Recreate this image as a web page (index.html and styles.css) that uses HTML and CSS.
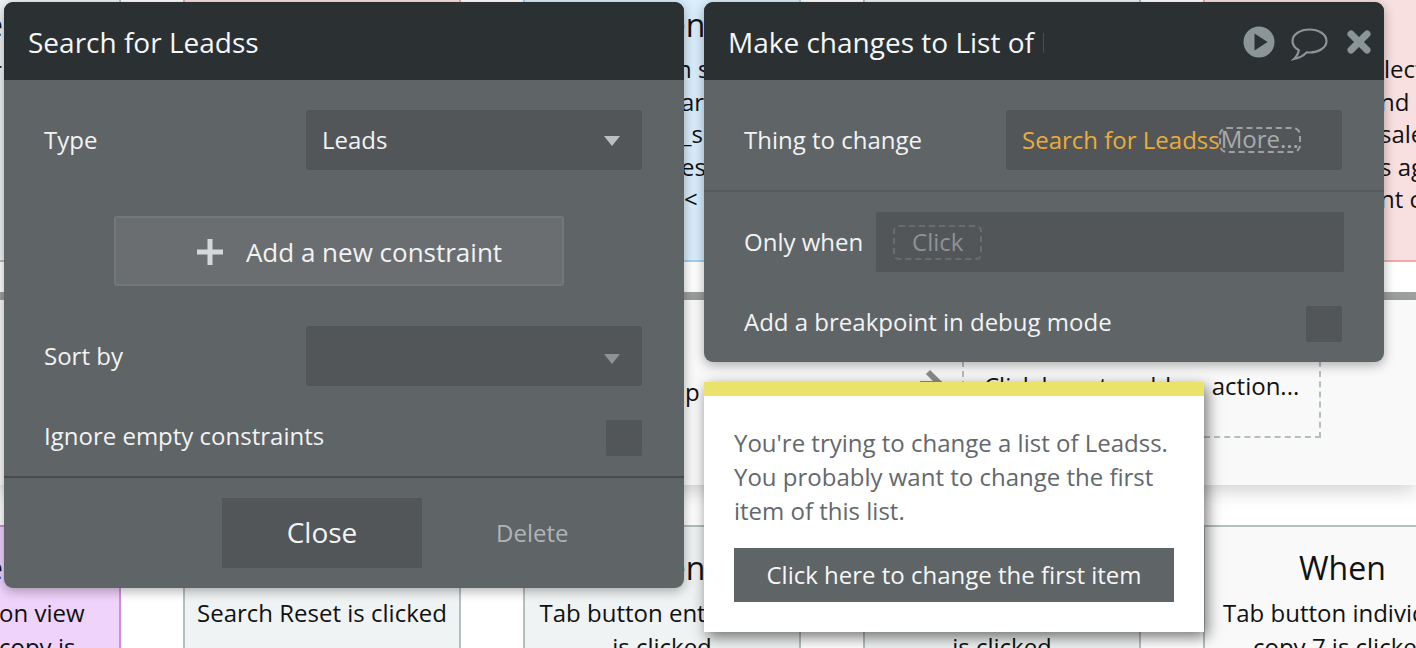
FILE: index.html
```html
<!DOCTYPE html>
<html lang="en">
<head>
<meta charset="utf-8">
<title>Workflow editor</title>
<link rel="stylesheet" href="styles.css">
</head>
<body>
<div class="canvas">
  <div class="row row-top">
    <div class="card card-edge gray">
      <div class="title edge-title">e</div>
      <div class="line edge-line">r</div>
    </div>
    <div class="card pink"></div>
    <div class="card blue">
      <div class="title">When</div>
      <div class="frag frag-n">n s</div>
      <div class="frag">ar</div>
      <div class="frag">_s</div>
      <div class="frag">es</div>
      <div class="frag frag-lt">&lt;</div>
    </div>
    <div class="card gray"></div>
    <div class="card card-wide pink">
      <div class="title"></div>
      <div class="frag frag-right frag-lect">lect</div>
      <div class="frag frag-right">nd</div>
      <div class="frag frag-right">sale</div>
      <div class="frag frag-right">s ag</div>
      <div class="frag frag-right">nt c</div>
    </div>
  </div>
  <div class="bar"></div>
  <div class="section">
    <div class="step-label">p              l     l      l</div>
    <svg class="step-arrow" width="38" height="40" viewBox="0 0 38 40" aria-hidden="true">
      <path d="M0 26H22M8 14L24 30" fill="none" stroke="#8c8c8c" stroke-width="6"/>
    </svg>
    <div class="add-action">Click here to add an action...</div>
  </div>
  <div class="row row-bottom">
    <div class="card card-edge purple">
      <div class="title edge-title">e</div>
      <div class="line on-view">on view</div>
      <div class="line on-view">copy is</div>
    </div>
    <div class="card gray">
      <div class="title">When</div>
      <div class="line">Search Reset is clicked</div>
    </div>
    <div class="card gray">
      <div class="title">When</div>
      <div class="line line-shift">Tab button entries</div>
      <div class="line">is clicked</div>
    </div>
    <div class="card gray">
      <div class="title">When</div>
      <div class="line">Tab button</div>
      <div class="line">is clicked</div>
    </div>
    <div class="card card-wide light">
      <div class="title last-title">When</div>
      <div class="line last-line">Tab button individual</div>
      <div class="line last-line">copy 7 is clicked</div>
    </div>
  </div>

  <section class="panel panel-search">
    <header class="panel-head"><span class="panel-title">Search for Leadss</span></header>
    <div class="field-row first-row">
      <span class="label">Type</span>
      <div class="select"><span>Leads</span><i class="caret"></i></div>
    </div>
    <button class="add-constraint" type="button">
      <svg width="28" height="28" viewBox="0 0 28 28" aria-hidden="true"><path d="M14 1V27M1 14H27" stroke="#d6d7d8" stroke-width="5" fill="none"/></svg>
      <span>Add a new constraint</span>
    </button>
    <div class="field-row sort-row">
      <span class="label">Sort by</span>
      <div class="select"><span></span><i class="caret dim"></i></div>
    </div>
    <div class="field-row check-row ignore-row">
      <span class="label">Ignore empty constraints</span>
      <div class="check"></div>
    </div>
    <div class="rule rule-dark"></div>
    <div class="foot">
      <button class="close" type="button">Close</button>
      <span class="delete">Delete</span>
    </div>
  </section>

  <section class="panel panel-action">
    <header class="panel-head">
      <span class="panel-title clipped">Make changes to List of Leadss</span>
      <div class="head-icons">
        <svg width="32" height="32" viewBox="0 0 32 32" aria-hidden="true"><circle cx="16" cy="16" r="15.5" fill="#8b9597"/><path d="M11.5 7.5L24.5 16L11.5 24.5Z" fill="#2b3033"/></svg>
        <svg class="icon-chat" width="37" height="33" viewBox="0 0 37 33" aria-hidden="true"><path d="M18.500 1.500C9.300 1.500 1.500 6.300 1.500 13C1.500 16.800 4 20 7.800 22.200C7.400 25 5.800 28.500 3 31C7.500 30 12.500 27.500 15.500 24.400C16.500 24.500 17.500 24.500 18.500 24.500C27.700 24.500 35.500 19.700 35.500 13C35.500 6.300 27.700 1.500 18.500 1.500Z" fill="none" stroke="#8b9597" stroke-width="2.200"/></svg>
        <svg class="icon-x" width="24" height="24" viewBox="0 0 24 24" aria-hidden="true"><path d="M4 4L20 20M20 4L4 20" stroke="#8b9597" stroke-width="7" stroke-linecap="round" fill="none"/></svg>
      </div>
    </header>
    <div class="field-row first-row">
      <span class="label">Thing to change</span>
      <div class="select value-field">
        <span class="orange">Search for Leadss</span><span class="more">More...</span>
      </div>
    </div>
    <div class="rule rule-soft"></div>
    <div class="field-row when-row">
      <span class="label">Only when</span>
      <div class="when-field"><span class="click">Click</span></div>
    </div>
    <div class="field-row check-row debug-row">
      <span class="label">Add a breakpoint in debug mode</span>
      <div class="check"></div>
    </div>
  </section>

  <aside class="tip">
    <p class="tip-text">You're trying to change a list of Leadss. You probably want to change the first item of this list.</p>
    <button class="tip-button" type="button">Click here to change the first item</button>
  </aside>
</div>
</body>
</html>
```

FILE: styles.css
```css
* { box-sizing: border-box; }
html, body { margin: 0; padding: 0; }
body { background: #fff; font-family: "Open Sans", "Noto Sans", sans-serif; color: #111; }
button { font-family: inherit; border: 0; padding: 0; }

.canvas { position: relative; width: 1416px; height: 648px; overflow: hidden; background: #fff; }

.row { display: flex; gap: 62px; }
.row-top { height: 262px; }
.row-bottom { height: 123px; margin-top: 40px; }

.card { flex: 0 0 278px; border-style: solid; border-width: 0 2px; border-color: transparent; text-align: center; overflow: hidden; }
.card-edge { flex-basis: 121px; border-left-width: 0; text-align: left; }
.card-wide { flex-basis: 213px; border-right-width: 0; text-align: left; }

.row-top .card { border-bottom-width: 2px; }
.row-bottom .card { border-top-width: 2px; }

.gray { background: #f0f3f3; border-color: #b4bfc0; }
.pink { background: #f9e0e0; border-color: #eeaaaa; }
.blue { background: #d9edfc; border-color: #a2d0f0; }
.purple { background: #efd3fb; border-color: #cf8fd6; }
.light { background: #f9f9f9; border-color: #b4bfc0; }

.title { font-size: 32px; line-height: 44px; height: 44px; margin-top: 3px; }
.row-bottom .title { margin-top: 19px; }
.line { font-size: 24px; line-height: 32px; }
.row-bottom .title + .line { margin-top: 7px; }
.row-bottom .line + .line { margin-top: 2px; }
.line-shift { padding-right: 38px; white-space: nowrap; }
.frag { font-size: 24px; line-height: 32.500px; padding-left: 156px; text-align: left; white-space: nowrap; }
.row-top .title + .frag { margin-top: 6px; }
.frag-n { padding-left: 152px; }
.frag-lt { padding-left: 159px; }
.frag-right { padding-left: 175px; }
.frag-lect { padding-left: 179px; }
.edge-title { margin-left: -15px; }
.edge-line { margin-top: 7px; margin-left: -8px; }
.on-view { white-space: nowrap; margin-left: -1px; }
.last-title { margin-left: 94px; }
.last-line { white-space: nowrap; margin-left: 18px; }
.last-line + .last-line { margin-left: 48px; }

.bar { height: 8px; margin-top: 30px; background: #a0a2a2; }

.section { display: flex; align-items: flex-start; height: 185px; padding-left: 685px; background: #f9f9f9; box-shadow: 0 6px 18px rgba(0, 0, 0, 0.18); position: relative; }
.step-label { flex: 0 0 235px; margin-top: 76px; font-size: 24px; line-height: 32px; white-space: pre; overflow: hidden; }
.step-arrow { flex: none; margin-top: 58px; }
.add-action { flex: 0 0 359px; height: 138px; margin-left: 4px; padding: 70px 10px 0 20px; border: 2px dashed #b4bfc0; border-top: 0; font-size: 24px; line-height: 32px; white-space: nowrap; }

.panel { position: absolute; top: 2px; width: 680px; background: #5f6467; border-radius: 9px; box-shadow: 0 3px 12px rgba(0, 0, 0, 0.32); color: #f2f3f3; font-size: 24px; overflow: hidden; }
.panel-search { left: 4px; height: 586px; }
.panel-action { left: 704px; height: 360px; }

.panel-head { display: flex; align-items: center; height: 78px; padding-left: 24px; background: #2b3033; }
.panel-title { font-size: 28px; padding-top: 2px; color: #f6f7f7; white-space: nowrap; }
.clipped { flex: none; width: 316px; overflow: hidden; }
.head-icons { display: flex; align-items: flex-start; margin-left: 199px; margin-top: 5px; gap: 16px; }
.head-icons svg { flex: none; }
.icon-chat { margin-top: 2px; }
.icon-x { margin: 4px 0 0 3px; }

.field-row { display: flex; align-items: center; justify-content: space-between; padding: 0 42px 0 40px; }
.first-row { margin-top: 30px; }
.label { padding-bottom: 2px; white-space: nowrap; }
.select > span:first-child { padding-bottom: 2px; }

.select { display: flex; align-items: center; justify-content: space-between; flex: none; width: 336px; height: 60px; padding: 0 22px 0 16px; background: #525659; border-radius: 2px; }
.caret { width: 0; height: 0; margin-top: 2px; border-left: 8.500px solid transparent; border-right: 8.500px solid transparent; border-top: 10px solid #bcbec0; }
.caret.dim { margin-top: 5px; border-top-color: #8f9395; }

.add-constraint { display: flex; align-items: center; justify-content: center; gap: 22px; width: 450px; height: 70px; margin: 46px 0 0 110px; padding: 1px 0 0 20px; background: #6a6e71; border: 2px solid #73777a; border-radius: 3px; color: #f2f3f3; font-size: 26px; }
.add-constraint svg { flex: none; }

.sort-row { margin-top: 40px; }
.check-row { height: 36px; }
.check-row .label { padding-bottom: 6px; }
.ignore-row { margin-top: 34px; }
.debug-row { margin-top: 34px; }
.check { flex: none; width: 36px; height: 36px; background: #525659; border-radius: 2px; }

.rule { height: 2px; }
.rule-dark { margin-top: 20px; background: #484c4f; }
.rule-soft { margin-top: 20px; background: #55595c; }

.foot { display: flex; align-items: center; margin: 20px 0 0 218px; }
.close { width: 200px; height: 70px; padding-bottom: 2px; background: #525659; color: #f2f3f3; font-size: 28px; }
.delete { margin-left: 74px; padding-bottom: 2px; color: #b0b3b5; }

.value-field { justify-content: flex-start; padding-right: 0; }
.orange { color: #e9ad38; white-space: nowrap; }
.more { flex: none; width: 82px; height: 26px; margin-left: -1px; border: 2px dashed #9ea1a3; border-radius: 8px; color: #a8abad; line-height: 20px; text-align: center; white-space: nowrap; }

.when-row { margin-top: 20px; padding-right: 40px; gap: 13px; }
.when-field { display: flex; align-items: center; width: 468px; height: 60px; padding-left: 17px; background: #525659; border-radius: 2px; }
.click { width: 89px; height: 35px; border: 2px dashed #696d70; border-radius: 6px; color: #8e9294; line-height: 29px; text-align: center; }

.tip { position: absolute; left: 704px; top: 382px; width: 500px; height: 250px; padding: 44px 30px 0; background: #fff; border-top: 14px solid #ebe26a; box-shadow: 3px 5px 14px rgba(0, 0, 0, 0.55); }
.tip-text { margin: -14px 0 0; color: #63686b; font-size: 24px; line-height: 34px; }
.tip-button { display: block; width: 440px; height: 54px; margin-top: 20px; padding-bottom: 2px; background: #5f6467; color: #f6f7f7; font-size: 24px; }
```
